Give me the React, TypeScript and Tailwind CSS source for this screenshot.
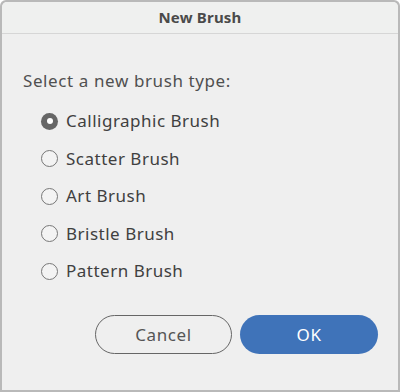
import { useState } from 'react';

const types = ['Calligraphic Brush', 'Scatter Brush', 'Art Brush', 'Bristle Brush', 'Pattern Brush'];

export default function App() {
  const [selected, setSelected] = useState(0);

  return (
    <div
      className="w-[400px] h-[392px] bg-[#b9b9b9] p-[2px] rounded-t-[6px]"
      style={{ fontFamily: '"Noto Sans", "Open Sans", sans-serif' }}
    >
      <div className="h-full flex flex-col bg-[#efefef] rounded-t-[5px] overflow-hidden">
        {/* Title bar */}
        <div className="h-[32px] shrink-0 flex items-center justify-center bg-[#eff0ef] border-b border-[#d6d6d6]">
          <span className="text-[15px] font-bold text-[#4a4a4a] tracking-[0.2px]">New Brush</span>
        </div>

        {/* Body */}
        <div className="flex flex-col pl-[21px] pt-[37px]">
          <p className="text-[17px] text-[#505050] leading-[20px] tracking-[0.6px]">Select a new brush type:</p>

          <div className="flex flex-col mt-[19px] pl-[18px] gap-[15.5px]">
            {types.map((t, i) => (
              <button
                key={t}
                onClick={() => setSelected(i)}
                className="flex items-center gap-[8px] h-[22px] text-left"
              >
                {selected === i ? (
                  <span className="w-[17px] h-[17px] rounded-full bg-[#666] flex items-center justify-center">
                    <span className="w-[6px] h-[6px] rounded-full bg-white" />
                  </span>
                ) : (
                  <span className="w-[17px] h-[17px] rounded-full border-[1.5px] border-[#777] bg-[#f3f3f3]" />
                )}
                <span className="text-[17px] text-[#404040] leading-[20px] tracking-[0.5px]">{t}</span>
              </button>
            ))}
          </div>
        </div>

        {/* Buttons */}
        <div className="flex justify-end gap-[8px] pr-[20px] mt-[33px]">
          <button className="w-[137px] h-[39px] rounded-full border-[1.5px] border-[#666] text-[17px] text-[#555] tracking-[0.6px]">
            Cancel
          </button>
          <button className="w-[138px] h-[39px] rounded-full bg-[#3f73b9] text-[17px] text-white tracking-[0.6px]">
            OK
          </button>
        </div>
      </div>
    </div>
  );
}
